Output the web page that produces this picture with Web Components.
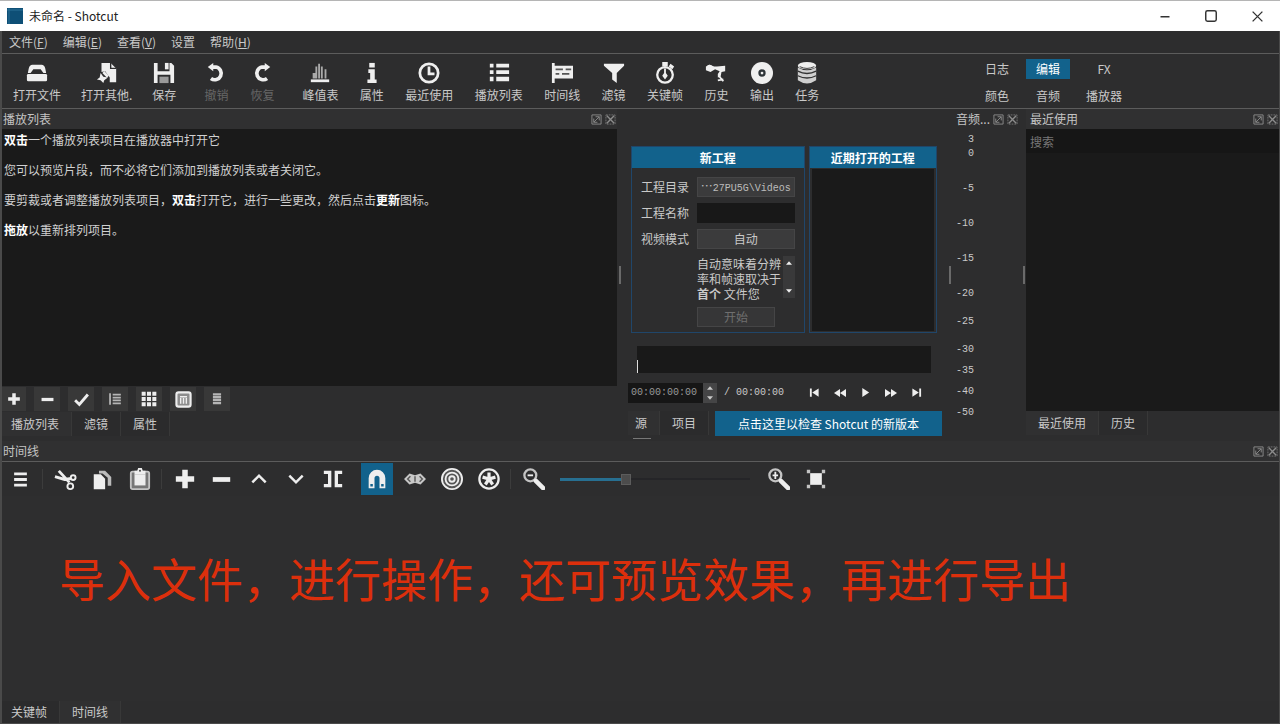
<!DOCTYPE html>
<html lang="zh-CN">
<head>
<meta charset="utf-8">
<title>未命名 - Shotcut</title>
<style>
  html, body { height: 100%; margin: 0; }
  body {
    background: #2d2d2e;
    color: #c9c9c9;
    font: 12px/16px "Noto Sans CJK SC", sans-serif;
    --mono: "Liberation Mono", "Noto Sans CJK SC", monospace;
    --accent: #12628c;
    --dark: #1a1a1a;
    --line: #5c5c5c;
    --raised: #383838;
  }
</style>
</head>
<body>
<shotcut-app></shotcut-app>
<script>
const RESET = `
  *, ::before, ::after { box-sizing: border-box; }
  button { font: inherit; color: inherit; background: none; border: 0; padding: 0; margin: 0; white-space: nowrap; }
  input { font: inherit; color: inherit; border: 0; padding: 0; margin: 0; min-width: 0; border-radius: 0; outline: 0; }
  p { margin: 0; }
  ul, ol { list-style: none; margin: 0; padding: 0; }
`;

function define(name, css, html) {
  const template = document.createElement('template');
  template.innerHTML = `<style>${RESET}${css}</style>${html}`;
  customElements.define(name, class extends HTMLElement {
    constructor() {
      super();
      this.attachShadow({ mode: 'open' }).append(template.content.cloneNode(true));
    }
  });
}

const ICONS = {
  logo: '<rect width="24" height="24" fill="#0e4f76"/><path d="M3 0v24M0 3h24" stroke="#2b7398" stroke-width="1.5"/>',
  min: '<path d="M6 13h12" stroke="currentColor" stroke-width="2"/>',
  max: '<rect x="3" y="3" width="18" height="18" rx="3" fill="none" stroke="currentColor" stroke-width="2.5"/>',
  close: '<path d="M3 3l18 18M21 3L3 21" stroke="currentColor" stroke-width="2.5"/>',
  float: '<path d="M2 2h20v20H2zM6 18L18 6M10 6h8v8M6 10v8h8" fill="none" stroke="currentColor" stroke-width="2"/>',
  dockclose: '<path d="M2 2h20v20H2z" fill="none" stroke="currentColor" stroke-width="1.5" stroke-dasharray="4 2"/><path d="M4 4l16 16M20 4L4 20" stroke="currentColor" stroke-width="3"/>',
  open: '<path d="M2 12l1-5q1-4 4-4h10q3 0 4 4l1 5h-3l-3-4H8l-3 4z"/><rect x="1" y="13" width="22" height="8" rx="1.5"/>',
  openother: '<path d="M6 1h10l6 6v15h-7v-5l-5-7-4 1z"/><path d="M16 1v6h6" fill="none" stroke="#2d2d2e" stroke-width="1.5"/><path d="M5 12l3 4 5 1-4 3-1 3-3-3-4-1 3-2z"/><path d="M8 11l5 5" stroke="currentColor" stroke-width="3"/>',
  save: '<path d="M1 1h4v9h13V1h2l3 3v19h-4v-9H5v9H1z"/><rect x="13" y="1" width="4" height="7"/><rect x="7" y="16" width="10" height="7" fill="#9a9a9a"/>',
  undo: '<path d="M7 5.5h5a7 7 0 1 1-5.5 12.5" fill="none" stroke="currentColor" stroke-width="4"/><path d="M9 1v9L3 5.500z"/>',
  redo: '<path d="M17 5.5h-5a7 7 0 1 0 5.500 12.500" fill="none" stroke="currentColor" stroke-width="4"/><path d="M15 1v9l6-4.500z"/>',
  peak: '<path d="M4 18V12h3V5h2v13zM10 18V2h2v16zM13 18V5h2v13zM17 18V8h2v10z" fill="#aaa"/><rect x="2" y="19" width="20" height="3"/>',
  info: '<rect x="9" y="1" width="6" height="5"/><path d="M8 8h7v11h2v4H7v-4h3v-7H8z"/>',
  clock: '<circle cx="12" cy="12" r="10" fill="none" stroke="currentColor" stroke-width="3"/><path d="M12 5v8h6" fill="none" stroke="currentColor" stroke-width="3"/>',
  list: '<path d="M2 2h4v4H2zM2 9h4v4H2zM2 16h4v5H2zM9 2h14v4H9zM9 9h14v4H9zM9 16h14v5H9z"/>',
  timeline: '<path d="M1 1h3v22H1zM4 4h20v14H4z"/><path d="M5 8h8M16 8h6M5 13h4M12 13h8" stroke="#555" stroke-width="2"/>',
  filter: '<path d="M1 2h22v2l-8 8v11l-5-4v-7L1 4z"/>',
  stopwatch: '<circle cx="12" cy="14" r="8.5" fill="none" stroke="currentColor" stroke-width="2.5"/><path d="M9 0h6v5H9zM18 2l4 3-2 3-4-3zM11 7h2v5l2 3-3 4-3-4 2-3z"/>',
  history: '<path d="M1 5l4-2 5 2h3l9-1v6l-4 1-1 5-3 1v-4l2-3-5-2-5 3-5-2z"/><path d="M15 15l5 6M14 20l6-1" stroke="currentColor" stroke-width="2"/><circle cx="5" cy="6" r="3"/>',
  disc: '<circle cx="12" cy="12" r="12"/><circle cx="12" cy="12" r="4" fill="#2d3438"/><circle cx="12" cy="12" r="1.5"/>',
  jobs: '<ellipse cx="12" cy="4" rx="10" ry="4"/><path d="M2 6q10 6 20 0v14q-10 7-20 0z" fill="#cfcfcf"/><path d="M2 10q10 5 20 0M2 15q10 5 20 0" fill="none" stroke="#333" stroke-width="1.5"/><path d="M4 5q8 4 16 0" fill="none" stroke="#333"/>',
  plus: '<path d="M9 2h6v7h7v6h-7v7H9v-7H2V9h7z"/>',
  minus: '<path d="M1 9h22v6H1z"/>',
  check: '<path d="M3 13l6 6L21 5" fill="none" stroke="currentColor" stroke-width="4"/>',
  detail: '<path d="M2 2h3v20H2zM8 3h14v3H8zM8 8h14v3H8zM8 13h14v3H8zM8 18h14v3H8z" fill="#b5b5b5"/>',
  grid: '<path d="M1 1h6v6H1zM9 1h6v6H9zM17 1h6v6h-6zM1 9h6v6H1zM9 9h6v6H9zM17 9h6v6h-6zM1 17h6v6H1zM9 17h6v6H9zM17 17h6v6h-6z"/>',
  tiles: '<rect x="2" y="2" width="20" height="20" rx="3" fill="#8c8c8c" stroke="currentColor" stroke-width="3"/><path d="M7 8h10M8 10v8M12 10v8M16 10v8" stroke="#eee" stroke-width="2"/>',
  lines: '<path d="M5 2h14v4H5zM5 7h14v4H5zM5 12h14v4H5zM5 17h14v4H5z" fill="#b5b5b5"/>',
  burger: '<path d="M3 2h18v4H3zM3 10h18v4H3zM3 18h18v4H3z"/>',
  cut: '<path d="M1 9l10 3 7-1M5 3l11 12" fill="none" stroke="currentColor" stroke-width="3"/><circle cx="20" cy="10" r="2.5" fill="none" stroke="currentColor" stroke-width="2"/><circle cx="17" cy="19" r="3" fill="none" stroke="currentColor" stroke-width="2"/>',
  copy: '<path d="M2 6h8l5 5v12H2z"/><path d="M8 2h7l7 7v10h-4v-9l-6-5H8z" fill="#bbb"/>',
  paste: '<rect x="2" y="4" width="20" height="19" rx="2" fill="#777" stroke="#c4c4c4" stroke-width="2"/><rect x="6" y="7" width="12" height="12"/><path d="M6 3h3l1-3h4l1 3h3v4H6z"/><circle cx="12" cy="3" r="1" fill="#333"/>',
  up: '<path d="M4 16l8-8 8 8" fill="none" stroke="currentColor" stroke-width="3"/>',
  down: '<path d="M4 8l8 8 8-8" fill="none" stroke="currentColor" stroke-width="3"/>',
  split: '<path d="M1 2h9v20H1v-4h5V6H1zM23 2h-9v20h9v-4h-5V6h5z"/>',
  magnet: '<path d="M2 23V11a10 10 0 0 1 20 0v12h-7V11a3 3 0 0 0-6 0v12z"/><path d="M4 18h3v3H4zM17 18h3v3h-3z" fill="#12628c"/>',
  eye: '<path d="M0 12l6-6 6 2 6-2 6 6-6 6-6-2-6 2z" fill="#c8c8c8"/><path d="M12 9v6M7 9l-3 3 3 3M17 9l3 3-3 3" fill="none" stroke="#555" stroke-width="1.5"/>',
  target: '<circle cx="12" cy="12" r="11" fill="#555" stroke="currentColor" stroke-width="2"/><circle cx="12" cy="12" r="7" fill="none" stroke="currentColor" stroke-width="2"/><circle cx="12" cy="12" r="3" fill="none" stroke="currentColor" stroke-width="2"/>',
  star: '<circle cx="12" cy="12" r="10.5" fill="none" stroke="currentColor" stroke-width="2.5"/><path d="M12 12V5M12 12l-7-2M12 12l7-2M12 12l-4 6M12 12l4 6" stroke="currentColor" stroke-width="3.5"/>',
  zoomout: '<circle cx="8" cy="8" r="6.5" fill="none" stroke="#c4c4c4" stroke-width="2.5"/><path d="M5 8h6" stroke="currentColor" stroke-width="2"/><path d="M14 14l8 8" stroke="currentColor" stroke-width="5" stroke-linecap="round"/>',
  zoomin: '<circle cx="8" cy="8" r="6.5" fill="none" stroke="#c4c4c4" stroke-width="2.5"/><path d="M5 8h6M8 4v8" stroke="currentColor" stroke-width="2"/><path d="M14 14l8 8" stroke="currentColor" stroke-width="5" stroke-linecap="round"/>',
  fit: '<rect x="5" y="5" width="14" height="14"/><path d="M1 1h4v4H1zM19 1h4v4h-4zM1 19h4v4H1zM19 19h4v4h-4z" fill="#c4c4c4"/>',
  first: '<path d="M2 3h4v18H2zM21 3v18L7 12z"/>',
  rewind: '<path d="M12 4v16L0 12zM24 4v16l-12-8z"/>',
  play: '<path d="M5 2l15 10L5 22z"/>',
  forward: '<path d="M0 4v16l12-8zM12 4v16l12-8z"/>',
  last: '<path d="M18 3h4v18h-4zM3 3v18l14-9z"/>',
  tup: '<path d="M12 7l9 10H3z"/>',
  tdown: '<path d="M12 17L3 7h18z"/>'
};

customElements.define('sc-icon', class extends HTMLElement {
  constructor() { super(); this.attachShadow({ mode: 'open' }); }
  connectedCallback() {
    const size = this.getAttribute('size') || '22';
    this.shadowRoot.innerHTML = `<style>:host{display:block;flex:none;width:${size}px;height:${size}px}svg{display:block;width:100%;height:100%}</style>
      <svg viewBox="0 0 24 24" fill="currentColor" aria-hidden="true">${ICONS[this.getAttribute('name')] || ''}</svg>`;
  }
});

const icon = (name, size) => `<sc-icon name="${name}" size="${size}"></sc-icon>`;

define('title-bar', `
  :host { display: flex; align-items: center; flex: none; height: 31px; background: #fff; color: #222; border-top: 1px solid #b5b5b5; padding-left: 7px; }
  .name { flex: 1; padding-left: 6px; }
  button { width: 46px; height: 30px; display: grid; place-items: center; color: #333; }
`, `${icon('logo', 16)}<span class="name">未命名 - Shotcut</span>
  <button aria-label="最小化">${icon('min', 18)}</button>
  <button aria-label="最大化">${icon('max', 14)}</button>
  <button aria-label="关闭">${icon('close', 13)}</button>`);

define('menu-bar', `
  :host { display: flex; align-items: center; flex: none; gap: 15px; height: 23px; padding-left: 7px; border-bottom: 1px solid var(--line); }
`, `<button>文件(<u>F</u>)</button><button>编辑(<u>E</u>)</button><button>查看(<u>V</u>)</button><button>设置</button><button>帮助(<u>H</u>)</button>`);

customElements.define('tool-button', class extends HTMLElement {
  constructor() { super(); this.attachShadow({ mode: 'open' }); }
  connectedCallback() {
    this.shadowRoot.innerHTML = `<style>${RESET}
      :host { display: block; }
      button { display: flex; flex-direction: column; align-items: center; gap: 3px; }
      sc-icon { color: #efefef; }
      :host([dim]) button { color: #666; }
      </style><button>${icon(this.getAttribute('icon'), 22)}<slot></slot></button>`;
  }
});

define('main-toolbar', `
  :host { display: flex; flex: none; height: 55px; padding: 8px 145px 0 11px; border-bottom: 1px solid var(--line); }
  .group { display: flex; gap: 22px; margin-right: 28px; }
  .group.files { gap: 20px; }
  .views { width: 517px; gap: 0; justify-content: space-between; margin-right: auto; }
  .layouts { display: grid; grid-template-columns: 50px 52px 60px; grid-template-rows: 20px 20px; row-gap: 7px; justify-items: center; margin-top: -3px; }
  .layouts button { width: 44px; height: 20px; }
  .layouts .on { background: var(--accent); color: #fff; }
`, `<div class="group files">
    <tool-button icon="open">打开文件</tool-button><tool-button icon="openother">打开其他.</tool-button><tool-button icon="save">保存</tool-button>
  </div>
  <div class="group"><tool-button icon="undo" dim>撤销</tool-button><tool-button icon="redo" dim>恢复</tool-button></div>
  <div class="group views">
    <tool-button icon="peak">峰值表</tool-button><tool-button icon="info">属性</tool-button><tool-button icon="clock">最近使用</tool-button>
    <tool-button icon="list">播放列表</tool-button><tool-button icon="timeline">时间线</tool-button><tool-button icon="filter">滤镜</tool-button>
    <tool-button icon="stopwatch">关键帧</tool-button><tool-button icon="history">历史</tool-button><tool-button icon="disc">输出</tool-button><tool-button icon="jobs">任务</tool-button>
  </div>
  <div class="layouts"><button>日志</button><button class="on">编辑</button><button>FX</button><button>颜色</button><button>音频</button><button>播放器</button></div>`);

define('dock-header', `
  :host { display: flex; flex: none; align-items: center; gap: 3px; height: 20px; padding: 0 1px; color: #c4c4c4; background: #303031; }
  .title { flex: 1; white-space: nowrap; }
  button { color: #8c8c8c; }
`, `<span class="title"><slot></slot></span>
  <button aria-label="浮动">${icon('float', 11)}</button><button aria-label="关闭">${icon('dockclose', 11)}</button>`);

define('dock-tab', `
  :host { display: block; }
  button { height: 100%; padding: 0 12px 0 var(--start, 12px); background: #2b2b2c; border-right: 1px solid #383838; }
  :host([selected]) button { background: #303031; }
`, `<button><slot></slot></button>`);

define('dock-tabs', `
  :host { display: flex; flex: none; height: 24px; }
  ::slotted(:first-child) { --start: var(--lead, 12px); }
`, `<slot></slot>`);

define('split-handle', `
  :host { display: grid; place-items: center; }
  div { width: 2px; height: 18px; background: #6a6a6a; }
`, `<div></div>`);

define('playlist-dock', `
  :host { display: flex; flex-direction: column; min-width: 0; padding-bottom: 5px; --lead: 9px; }
  .list { flex: 1; background: var(--dark); padding: 3px 2px; display: flex; flex-direction: column; gap: 14px; color: #d0d0d0; }
  b { color: #fff; }
  .tools { display: flex; gap: 8px; height: 26px; align-items: center; }
  .tools button { width: 26px; height: 24px; display: grid; place-items: center; background: var(--raised); color: #eee; }
  .tools button:first-child { width: 24px; }
`, `<dock-header>播放列表</dock-header>
  <div class="list">
    <p><b>双击</b>一个播放列表项目在播放器中打开它</p>
    <p>您可以预览片段，而不必将它们添加到播放列表或者关闭它。</p>
    <p>要剪裁或者调整播放列表项目，<b>双击</b>打开它，进行一些更改，然后点击<b>更新</b>图标。</p>
    <p><b>拖放</b>以重新排列项目。</p>
  </div>
  <div class="tools">
    <button aria-label="添加">${icon('plus', 14)}</button><button aria-label="移除">${icon('minus', 13)}</button><button aria-label="更新">${icon('check', 17)}</button>
    <button aria-label="详细">${icon('detail', 14)}</button><button aria-label="图标">${icon('grid', 16)}</button><button aria-label="平铺">${icon('tiles', 17)}</button><button aria-label="菜单">${icon('lines', 14)}</button>
  </div>
  <dock-tabs><dock-tab selected>播放列表</dock-tab><dock-tab>滤镜</dock-tab><dock-tab>属性</dock-tab></dock-tabs>`);

define('project-card', `
  :host { display: flex; flex-direction: column; border: 1px solid #20466a; }
  h2 { margin: 0; font: bold 12px/21px "Noto Sans CJK SC", sans-serif; height: 21px; text-align: center; color: #fff; background: var(--accent); white-space: nowrap; }
`, `<h2><slot name="title"></slot></h2><slot></slot>`);

define('new-project', `
  :host { display: grid; grid-template-columns: 56px minmax(0, 1fr); grid-template-rows: 20px 20px 20px 46px 20px; row-gap: 6px; padding: 9px 9px 0 9px; align-items: center; }
  input, .btn { width: 100%; height: 20px; }
  .btn { background: #3b3b3c; border: 1px solid #454546; line-height: 18px; }
  .path { font: 10px/18px var(--mono); color: #bbb; }
  .path span { font: 12px/16px "Noto Sans CJK SC", sans-serif; }
  input { background: #181818; }
  .note { grid-column: 2; display: flex; line-height: 15px; }
  .note p { flex: 1; }
  .bar { flex: none; width: 12px; height: 42px; background: #39393a; display: flex; flex-direction: column; justify-content: space-between; align-items: center; padding: 3px 0; color: #eee; }
  .start { grid-column: 2; width: 80%; color: #6f6f6f; background: #363637; }
`, `<label for="dir">工程目录</label><button id="dir" class="btn path"><span>…</span>27PU5G\\Videos</button>
  <label for="name">工程名称</label><input id="name" type="text">
  <label for="mode">视频模式</label><button id="mode" class="btn">自动</button>
  <div class="note"><p>自动意味着分辨率和帧速取决于<b>首个</b> 文件您</p>
    <div class="bar"><button aria-label="上">${icon('tup', 8)}</button><button aria-label="下">${icon('tdown', 8)}</button></div></div>
  <button class="btn start">开始</button>`);

define('player-panel', `
  :host { display: flex; flex-direction: column; min-width: 0; padding: 37px 6px 0 5px; --lead: 7px; }
  .cards { display: flex; gap: 4px; height: 187px; padding: 0 5px 0 3px; }
  .new { flex: 174; min-width: 0; } .recent { flex: 128; min-width: 0; }
  .empty { flex: 1; background: var(--dark); margin: 1px 2px; }
  .scrub { height: 27px; margin: 13px 11px 9px 9px; background: #191919; display: flex; align-items: flex-end; }
  .scrub i { width: 1px; height: 13px; background: #ddd; }
  .transport { display: flex; align-items: center; height: 21px; }
  .transport input { width: 75px; height: 20px; padding-left: 3px; background: #161616; color: #999; font: 10px/20px var(--mono); }
  .spin { width: 14px; height: 20px; background: #454546; display: flex; flex-direction: column; align-items: center; justify-content: space-around; }
  .total { font: 10px/16px var(--mono); margin-left: 7px; white-space: pre; }
  .keys { display: flex; gap: 14px; margin-left: auto; margin-right: 20px; color: #eee; }
  .foot { display: flex; height: 25px; margin-top: 8px; }
  .foot .check { margin-left: auto; width: 227px; background: var(--accent); color: #fff; }
  .under { width: 18px; height: 1px; margin: 2px 5px; background: #777; }
`, `<div class="cards">
    <project-card class="new"><span slot="title">新工程</span><new-project></new-project></project-card>
    <project-card class="recent"><span slot="title">近期打开的工程</span><div class="empty"></div></project-card>
  </div>
  <div class="scrub"><i></i></div>
  <div class="transport">
    <input type="text" aria-label="当前时间" value="00:00:00:00">
    <div class="spin"><button aria-label="增加">${icon('tup', 8)}</button><button aria-label="减少">${icon('tdown', 8)}</button></div>
    <span class="total">/ 00:00:00</span>
    <div class="keys"><button aria-label="起点">${icon('first', 11)}</button><button aria-label="快退">${icon('rewind', 12)}</button><button aria-label="播放">${icon('play', 11)}</button><button aria-label="快进">${icon('forward', 12)}</button><button aria-label="终点">${icon('last', 11)}</button></div>
  </div>
  <div class="foot"><dock-tabs><dock-tab selected>源</dock-tab><dock-tab>项目</dock-tab></dock-tabs><button class="check">点击这里以检查 Shotcut 的新版本</button></div>
  <div class="under"></div>`);

define('audio-meter', `
  :host { display: block; min-width: 0; }
  dock-header { padding: 0 4px; background: none; }
  ol { display: grid; grid-template-rows: 14px 35px 35px 35px 35px 28px 28px 21px 21px 21px 14px; margin-top: 4px; width: 22px; text-align: right; font: 10px/14px var(--mono); }
`, `<dock-header>音频...</dock-header>
  <ol><li>3</li><li>0</li><li>-5</li><li>-10</li><li>-15</li><li>-20</li><li>-25</li><li>-30</li><li>-35</li><li>-40</li><li>-50</li></ol>`);

define('recent-dock', `
  :host { display: flex; flex-direction: column; min-width: 0; padding-bottom: 6px; }
  dock-header { padding-left: 4px; }
  .body { flex: 1; background: var(--dark); }
  input { display: block; width: 100%; height: 24px; padding: 0 4px; background: #161616; }
  input::placeholder { color: #777; opacity: 1; }
`, `<dock-header>最近使用</dock-header>
  <div class="body"><input type="search" aria-label="搜索" placeholder="搜索"></div>
  <dock-tabs><dock-tab selected>最近使用</dock-tab><dock-tab>历史</dock-tab></dock-tabs>`);

define('timeline-dock', `
  :host { display: flex; flex-direction: column; flex: 1; min-height: 0; --lead: 9px; }
  .bar { display: flex; flex: none; align-items: center; height: 35px; border-top: 1px solid var(--line); color: #eee; }
  .bar button { width: 37px; height: 32px; display: grid; place-items: center; }
  .bar .on { width: 32px; margin: 0 3px 0 10px; background: var(--accent); }
  .bar hr { width: 1px; height: 20px; margin: 0 4px 0 3px; border: 0; background: #3c3c3c; }
  input { appearance: none; -webkit-appearance: none; width: 190px; height: 12px; margin: 0 10px 0 8px; background: linear-gradient(#276f91, #276f91) 0 50% / 35% 3px no-repeat, linear-gradient(#252528, #252528) 0 50% / 100% 2px no-repeat; }
  input::-webkit-slider-thumb { -webkit-appearance: none; width: 10px; height: 11px; background: #4c4c4c; border: 1px solid #5c5c5c; }
  .tracks { flex: 1; padding: 56px 0 0 57px; background: #2e2e2f; }
  .caption { font-size: 46px; line-height: 50px; color: #dc2f0c; white-space: nowrap; }
  dock-tabs { height: 22px; }
`, `<dock-header>时间线</dock-header>
  <div class="bar">
    <button aria-label="菜单">${icon('burger', 17)}</button><hr>
    <button aria-label="剪切">${icon('cut', 23)}</button><button aria-label="复制">${icon('copy', 21)}</button><button aria-label="粘贴">${icon('paste', 22)}</button><hr>
    <button aria-label="添加">${icon('plus', 22)}</button><button aria-label="移除">${icon('minus', 19)}</button><button aria-label="提升">${icon('up', 20)}</button><button aria-label="覆盖">${icon('down', 20)}</button>
    <button aria-label="分割">${icon('split', 20)}</button><button class="on" aria-label="吸附">${icon('magnet', 20)}</button><button aria-label="拖动">${icon('eye', 22)}</button><button aria-label="波纹">${icon('target', 22)}</button><button aria-label="全部波纹">${icon('star', 22)}</button><hr>
    <button aria-label="缩小">${icon('zoomout', 22)}</button><input type="range" aria-label="缩放" min="0" max="100" value="34"><button aria-label="放大">${icon('zoomin', 22)}</button><button aria-label="适合">${icon('fit', 20)}</button>
  </div>
  <div class="tracks"><p class="caption">导入文件，进行操作，还可预览效果，再进行导出</p></div>
  <dock-tabs><dock-tab>关键帧</dock-tab><dock-tab selected>时间线</dock-tab></dock-tabs>`);

define('shotcut-app', `
  :host { display: flex; flex-direction: column; min-height: 100vh; }
  .client { flex: 1; display: flex; flex-direction: column; border: solid #4a4a4a; border-width: 0 1px 1px 2px; }
  .docks { display: grid; flex: none; grid-template-columns: 615fr 6px 325fr 4px 70fr 4px 253fr; }
`, `<title-bar></title-bar>
  <div class="client">
    <menu-bar></menu-bar>
    <main-toolbar></main-toolbar>
    <div class="docks">
      <playlist-dock></playlist-dock><split-handle></split-handle>
      <player-panel></player-panel><split-handle></split-handle>
      <audio-meter></audio-meter><split-handle></split-handle>
      <recent-dock></recent-dock>
    </div>
    <timeline-dock></timeline-dock>
  </div>`);
</script>
</body>
</html>
